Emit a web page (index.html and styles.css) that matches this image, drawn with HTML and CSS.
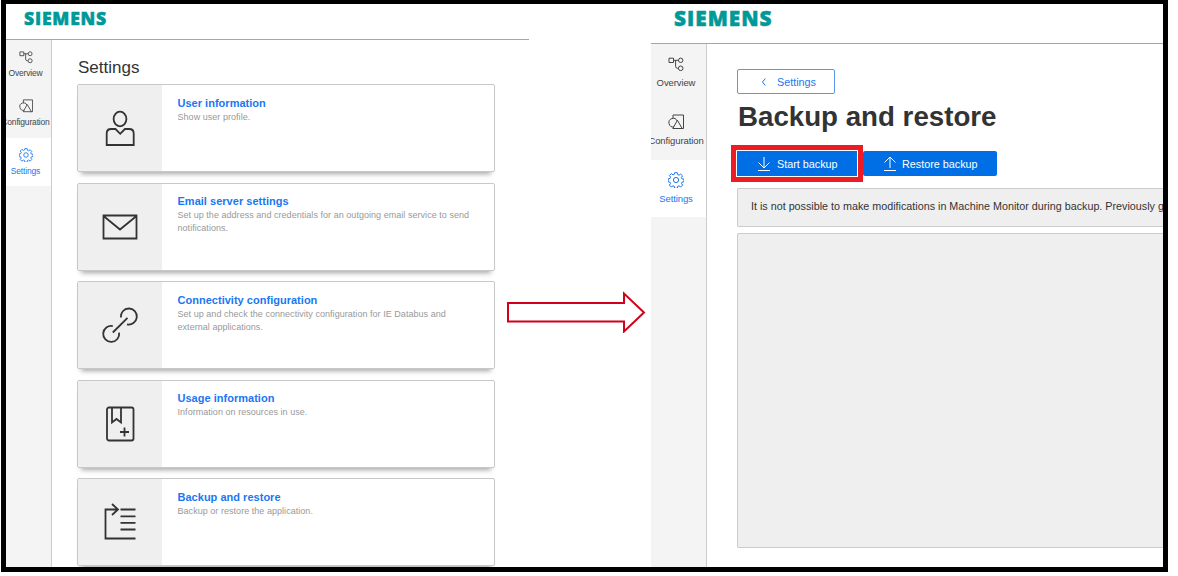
FILE: index.html
```html
<!DOCTYPE html>
<html lang="en">
<head>
<meta charset="utf-8">
<title>Backup and restore</title>
<link rel="stylesheet" href="styles.css">
</head>
<body>
<svg class="defs" aria-hidden="true">
  <symbol id="overview" viewBox="0 0 16 16"><path d="M1 2.200h4.500v4.300H1zM5.500 4.300h5M7.600 4.300v6q0 2 2 2h.8"/><circle cx="12.700" cy="4.300" r="2.200"/><circle cx="12.700" cy="12.300" r="2.300"/></symbol>
  <symbol id="shapes" viewBox="0 0 16 16"><path d="M5 4.500V1h10.500v13.500H13.500M9.400 6.300l4.800 8.200H4.800z"/><path d="M6 12.900A4.300 4.300 0 1 1 9.200 7"/></symbol>
  <symbol id="gear" viewBox="0 0 16 16"><circle cx="8" cy="8" r="2.600"/><path d="M6.700 .7h2.600l.4 2 1.300.500 1.700-1.200 1.900 1.900-1.200 1.700.5 1.200 2.100.4v2.600l-2.100.4-.5 1.200 1.200 1.700-1.900 1.900-1.700-1.200-1.300.5-.4 2H6.700l-.4-2-1.300-.5L3.300 15l-1.900-1.900 1.200-1.700-.5-1.200L.2 9.800V6.800l1.900-.4.5-1.200-1.200-1.700 1.900-1.900L5 2.800l1.300-.5z"/></symbol>
</svg>
<div class="frame">
  <section class="app small">
    <header class="top"><span class="brand">SIEMENS</span></header>
    <div class="body">
      <nav class="side">
        <a class="item"><svg><use href="#overview"/></svg><span>Overview</span></a>
        <a class="item"><svg><use href="#shapes"/></svg><span>Configuration</span></a>
        <a class="item active"><svg><use href="#gear"/></svg><span>Settings</span></a>
      </nav>
      <main class="list">
        <h2 class="title">Settings</h2>
        <article class="card">
          <div class="pic"><svg viewBox="0 0 40 40"><ellipse cx="20" cy="11" rx="6.400" ry="7.300"/><path d="M6.700 37V25.500q0-4.500 4.500-4.500h4.300l4.700 4.800 4.700-4.800h4.300q4.500 0 4.500 4.500V37z"/></svg></div>
          <div class="info"><h3>User information</h3><p>Show user profile.</p></div>
        </article>
        <article class="card">
          <div class="pic"><svg viewBox="0 0 40 40"><path d="M3.500 8.500h33v23h-33zM3.500 9l16.500 13.500L36.500 9"/></svg></div>
          <div class="info"><h3>Email server settings</h3><p>Set up the address and credentials for an outgoing email service to send notifications.</p></div>
        </article>
        <article class="card">
          <div class="pic"><svg viewBox="0 0 40 40"><path d="M12.800 27.500L27.500 12.800M20.900 12.500A8 8 0 1 1 27 19.300M12.800 21.100A8 8 0 1 0 19.100 27.700"/></svg></div>
          <div class="info"><h3>Connectivity configuration</h3><p>Set up and check the connectivity configuration for IE Databus and external applications.</p></div>
        </article>
        <article class="card">
          <div class="pic"><svg viewBox="0 0 40 40"><rect x="7" y="3.500" width="26.500" height="33" rx="2"/><path d="M12 3.500v15l4.500-3.500 4.500 3.500v-15M24.500 23.500v9M20 28h9"/></svg></div>
          <div class="info"><h3>Usage information</h3><p>Information on resources in use.</p></div>
        </article>
        <article class="card">
          <div class="pic"><svg viewBox="0 0 40 40"><path d="M35.500 36.500h-30V7.500H18M12 2l6 5.500-6 5.500M20.500 7.500h15M20.500 14.300h15M20.500 20.800h15M20.500 27.500h15"/></svg></div>
          <div class="info"><h3>Backup and restore</h3><p>Backup or restore the application.</p></div>
        </article>
      </main>
    </div>
  </section>
  <section class="app large">
    <header class="top"><span class="brand">SIEMENS</span></header>
    <div class="body">
      <nav class="side">
        <a class="item"><svg><use href="#overview"/></svg><span>Overview</span></a>
        <a class="item"><svg><use href="#shapes"/></svg><span>Configuration</span></a>
        <a class="item active"><svg><use href="#gear"/></svg><span>Settings</span></a>
      </nav>
      <main class="detail">
        <button class="back"><svg viewBox="0 0 6 10"><path d="M4.300 1.500L1.500 5l2.800 3.500"/></svg>Settings</button>
        <h1>Backup and restore</h1>
        <div class="actions">
          <button class="primary start"><svg viewBox="0 0 14 16"><path d="M7 1v10M1.500 6.500L7 12l5.500-5.500M1 14.500h12"/></svg>Start backup</button>
          <button class="primary restore"><svg viewBox="0 0 14 16"><path d="M7 12V1.500M1.500 6.500L7 1l5.500 5.500M1 14.500h12"/></svg>Restore backup</button>
        </div>
        <div class="note">It is not possible to make modifications in Machine Monitor during backup. Previously g</div>
        <div class="log"></div>
      </main>
    </div>
  </section>
  <svg class="arrow" viewBox="0 0 140 42"><path d="M2 12h116V2.500L138 21.500 118 40.500V30.500H2z"/></svg>
</div>
</body>
</html>
```
FILE: styles.css
```css
* { box-sizing: border-box; }
body { margin: 0; background: #fff; font-family: "Liberation Sans", Arial, sans-serif; color: #333; }
h1, h2, h3, p { margin: 0; }
svg { fill: none; stroke: currentColor; flex: none; }
button { font-family: inherit; padding: 0; margin: 0; }
.defs { display: block; width: 0; height: 0; }

.frame {
  position: relative;
  display: flex;
  justify-content: space-between;
  width: 1167px;
  height: 572px;
  margin-left: 1px;
  border: solid #000;
  border-width: 4px 5px 5px;
  overflow: hidden;
}
.app { display: flex; flex-direction: column; overflow: hidden; height: 563px; }
.small { width: 523px; }
.large { width: 512px; }
.top { flex: none; border-bottom: 1px solid #9aabb5; }
.small .top { height: 36px; padding: 4px 0 0 18px; }
.large .top { height: 40px; padding: 3px 0 0 23px; }
.brand { display: block; color: #009999; font-family: "Open Sans", sans-serif; font-weight: 800; white-space: nowrap; -webkit-text-stroke: .5px #099; }
.small .brand { font-size: 17.600px; line-height: 20px; letter-spacing: .8px; }
.large .brand { font-size: 20.800px; line-height: 22px; letter-spacing: 1px; }
.body { display: flex; flex: 1; min-height: 0; }

.side { flex: none; background: #f4f4f4; border-right: 1px solid #ccc; overflow: hidden; }
.small .side { width: 46px; }
.large .side { width: 56px; }
.item { display: flex; flex-direction: column; align-items: center; color: #444; }
.item.active { background: #fff; color: #1a77f2; }
.small .item { height: 48.800px; padding: 10px 0 0; font-size: 8.500px; line-height: 11px; gap: 4px; margin-left: -6px; letter-spacing: -.17px; }
.large .item { height: 57.800px; padding: 12px 5px 0 0; font-size: 9.500px; line-height: 12px; gap: 5px; letter-spacing: -.1px; }
.small .item svg { width: 14px; height: 14px; }
.large .item svg { width: 16px; height: 16px; }
.item span { white-space: nowrap; }

.list { display: flex; flex-direction: column; gap: 10.500px; padding-left: 25px; }
.title { font-size: 17px; font-weight: 400; line-height: 20px; margin: 18px 0 -4.500px; padding-left: 1px; }
.card {
  display: flex;
  flex: none;
  width: 418px;
  height: 88px;
  border: 1px solid #c8c8c8;
  border-radius: 2px;
  background: #fff;
  box-shadow: 0 6px 5px -4px rgba(0, 0, 0, .35);
}
.pic { display: flex; align-items: center; justify-content: center; width: 84px; background: #efefef; }
.pic svg { width: 40px; height: 40px; stroke: #333; stroke-width: 1.800; }
.info { flex: 1; padding: 11.600px 20px 0 15.500px; }
.info h3 { color: #1a77f2; font-size: 11px; line-height: 13px; letter-spacing: .02px; }
.info p { color: #999; font-size: 9px; line-height: 13px; margin-top: 1px; letter-spacing: .04px; }

.detail { flex: 1; min-width: 0; padding: 25px 0 0 30px; }
.back, .primary { display: flex; align-items: center; font-size: 10.800px; border-radius: 2px; height: 25px; }
.back { width: 98px; background: #fff; border: 1px solid #5c96ee; color: #1a77f2; padding-left: 23px; gap: 10px; }
.back svg { width: 6px; height: 10px; }
.detail h1 { font-size: 27.700px; line-height: 32px; margin: 7px 0 18px; padding-left: 1px; white-space: nowrap; }
.actions { display: flex; gap: 6px; }
.primary { background: #006fe6; color: #fff; border: 0; padding-left: 20px; gap: 6px; }
.primary svg { width: 14px; height: 16px; }
.start { width: 120px; outline: 5px solid #ed1c24; outline-offset: 1px; border-radius: 0; }
.restore { width: 134px; gap: 5px; }
.note, .log { background: #efefef; border: 1px solid #ccc; border-right: 0; border-radius: 2px 0 0 2px; }
.note { height: 39px; margin-top: 12px; padding-left: 13px; font-size: 10.760px; line-height: 34px; white-space: nowrap; overflow: hidden; }
.log { height: 315px; margin-top: 6px; }
.arrow { position: absolute; left: 500px; top: 287px; width: 140px; height: 42px; stroke: #d0021b; stroke-width: 2; }
```
